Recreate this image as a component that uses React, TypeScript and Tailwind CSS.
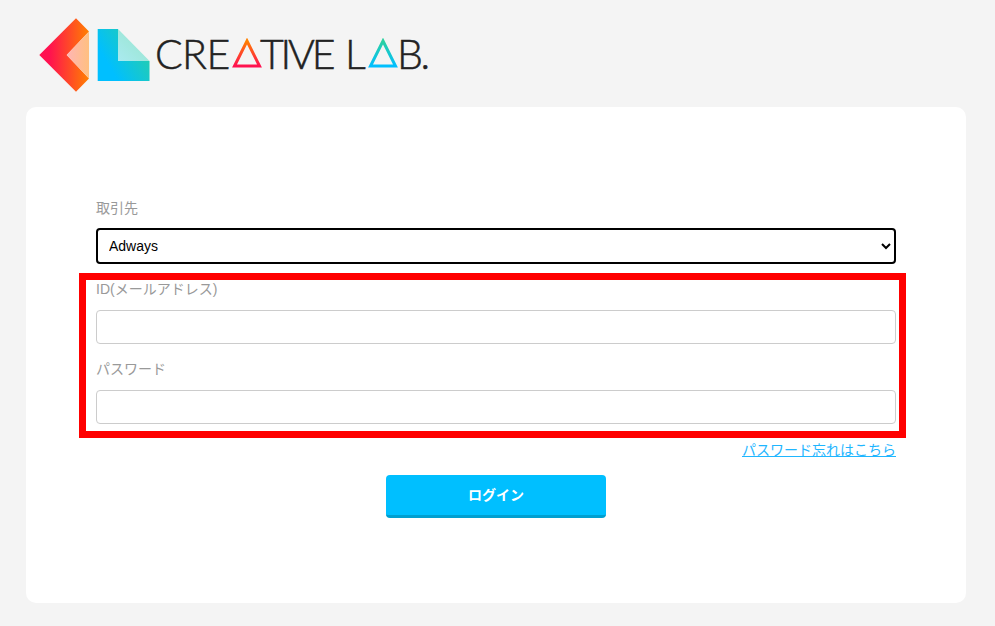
import React from "react";

const LogoMark = () => (
  <svg width="112" height="76" viewBox="39 17 112 76" className="flex-none">
    <defs>
      <linearGradient id="redOrange" x1="0" y1="0" x2="1" y2="0">
        <stop offset="0.2" stopColor="#ff1150" />
        <stop offset="1" stopColor="#ff8000" />
      </linearGradient>
      <linearGradient id="redOrangeLight" x1="0" y1="0" x2="1" y2="0">
        <stop offset="0" stopColor="#ffb5b5" />
        <stop offset="1" stopColor="#ffc080" />
      </linearGradient>
      <linearGradient id="blueGreen" x1="0" y1="0.8" x2="1" y2="0.2">
        <stop offset="0.2" stopColor="#00bfff" />
        <stop offset="1" stopColor="#2bd0a0" />
      </linearGradient>
      <linearGradient id="blueGreenLight" x1="0" y1="1" x2="1" y2="0">
        <stop offset="0" stopColor="#aaeaf0" />
        <stop offset="1" stopColor="#95e5c8" />
      </linearGradient>
    </defs>
    <polygon points="39.3,55 76,18.3 89,31.5 66.7,55 89,78.5 76,91.7" fill="url(#redOrange)" />
    <polygon points="66.7,55 89,31.5 89,78.5" fill="url(#redOrangeLight)" />
    <polygon points="97.7,29 118,29 118,61 149.5,61 149.5,81 97.7,81" fill="url(#blueGreen)" />
    <polygon points="118,29 149.5,61 118,61" fill="url(#blueGreenLight)" />
  </svg>
);

const Delta = ({ id, top, bottom }: { id: string; top: string; bottom: string }) => (
  <svg width="30" height="30" viewBox="0 0 30 30" className="flex-none">
    <defs>
      <linearGradient id={id} x1="0" y1="0" x2="0" y2="1">
        <stop offset="0" stopColor={top} />
        <stop offset="1" stopColor={bottom} />
      </linearGradient>
    </defs>
    <polygon points="15,3 27.5,28 2.5,28" fill="none" stroke={`url(#${id})`} strokeWidth="3" />
  </svg>
);

const App = () => {
  return (
    <div className="min-h-[626px] bg-[#f4f4f4] font-['Liberation_Sans','Noto_Sans_CJK_JP',sans-serif]">
      <header className="flex h-[107px] items-start pl-[39px] pt-[17px]">
        <LogoMark />
        <div className="ml-[4px] mt-[20px] flex h-[32px] items-center font-['Lato',sans-serif] text-[41px] font-light leading-none text-[#222] [-webkit-text-stroke:0.5px_#222]">
          <span className="w-[77px] tracking-[-0.6px]">CRE</span>
          <Delta id="deltaRed" top="#ff8000" bottom="#ff1150" />
          <span className="w-[83px] -translate-x-[2px] tracking-[-3.2px]">TIVE</span>
          <span className="w-[23px]">L</span>
          <Delta id="deltaBlue" top="#2bd0a0" bottom="#00bfff" />
          <span className="-translate-x-px tracking-[-2.5px]">B.</span>
        </div>
      </header>

      <main className="ml-[26px] mr-[29px] h-[496px] rounded-[10px] bg-white px-[70px] pt-[91px]">
        <form className="relative text-[14px] leading-5 text-[#999]">
          <label className="mb-[10px] block">取引先</label>
          <select className="mb-[15px] block h-9 w-full rounded border-2 border-black bg-white pl-[7px] text-[14px] text-black">
            <option>Adways</option>
          </select>

          <label className="mb-[11px] block">ID(メールアドレス)</label>
          <input type="text" className="mb-[15px] block h-[34px] w-full rounded border border-[#ccc] bg-white" />

          <label className="mb-[11px] block">パスワード</label>
          <input type="password" className="block h-[34px] w-full rounded border border-[#ccc] bg-white" />

          <div className="mt-4 text-right">
            <a href="#" className="text-[#1fb6ff] underline">パスワード忘れはこちら</a>
          </div>

          <div className="mt-[15px] flex justify-center">
            <button type="button" className="h-[43px] w-[220px] rounded border-b-[3px] border-[#009fd0] bg-[#00bfff] text-[14px] font-bold text-white">
              ログイン
            </button>
          </div>

          <div className="pointer-events-none absolute left-[-17px] top-[75px] h-[165px] w-[827px] border-[7px] border-[#ff0000]"></div>
        </form>
      </main>
    </div>
  );
};

export default App;
